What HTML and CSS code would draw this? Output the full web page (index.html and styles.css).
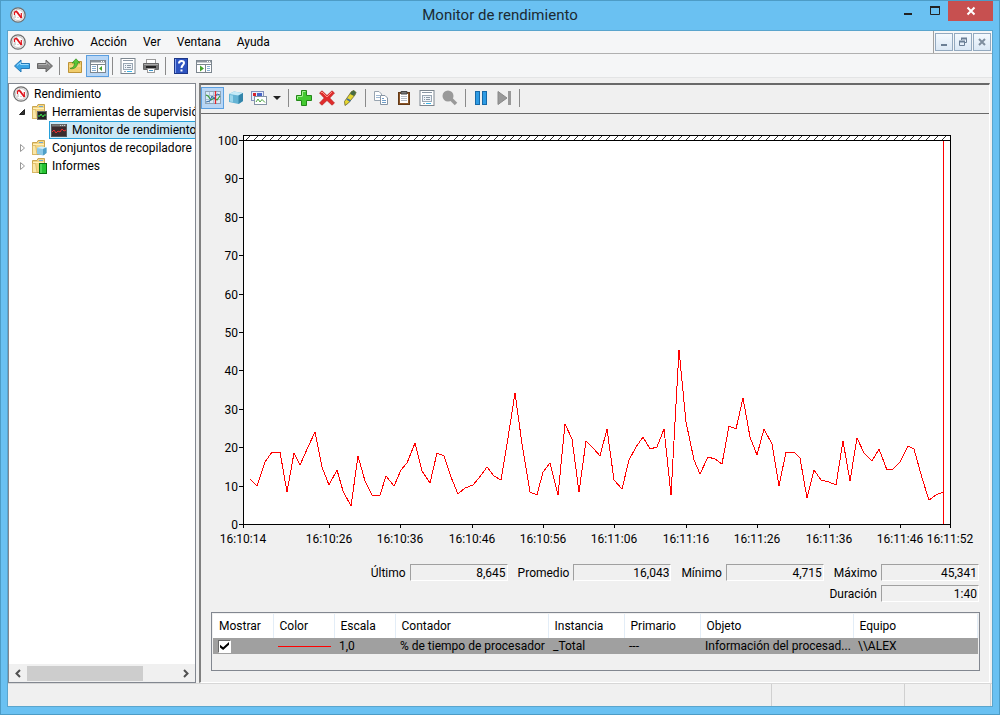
FILE: index.html
```html
<!DOCTYPE html>
<html lang="es">
<head>
<meta charset="utf-8">
<title>Monitor de rendimiento</title>
<link rel="stylesheet" href="styles.css">
</head>
<body>
<svg class="defs" aria-hidden="true">
  <symbol id="gauge" viewBox="0 0 16 16">
    <circle cx="8" cy="8" r="7.2" fill="#f4f4f4" stroke="#6e6e6e" stroke-width="1.300"/>
    <circle cx="8" cy="8" r="5.500" fill="#fff" stroke="#b5b0b0" stroke-width=".7"/>
    <path d="M5 11V8M8 11V10M8 5V7" stroke="#999" stroke-width=".8"/>
    <path d="M4.500 5L6.500 4.500L11.500 11" fill="none" stroke="#e0141c" stroke-width="1.800"/>
    <path d="M4.500 5V8M11.300 6V11" fill="none" stroke="#e0141c" stroke-width="1.200"/>
  </symbol>
  <symbol id="folder" viewBox="0 0 16 16">
    <path d="M1.500 14.500V2.500H6L7 .5H13.500V14.500Z" fill="#f3d582" stroke="#c9a551"/>
    <path d="M8 2.500H12" stroke="#6fa8d8"/><path d="M2 4.500H13" stroke="#fff0bb"/>
    <path d="M1.500 14.500V5.500H4.500L6 14.500Z" fill="#fae7a8" stroke="#d3ad55" stroke-width=".6"/>
  </symbol>
  <symbol id="props" viewBox="0 0 16 16">
    <rect x="1" y=".5" width="14" height="15" fill="#fff" stroke="#7c868f"/>
    <path d="M3 2.500H13" stroke="#8a97a5"/>
    <rect x="3.500" y="5.500" width="9" height="6" fill="#eef3f8" stroke="#9aa7b4"/>
    <path d="M5 7.500H6M7 7.500H11M5 9.500H6M7 9.500H11" stroke="#8a97a5"/>
    <path d="M4 13.500H6" stroke="#9aa7b4"/><path d="M7 13.500H12" stroke="#3bb5e8"/>
  </symbol>
</svg>

<header class="titlebar">
  <svg class="ic"><use href="#gauge"/></svg>
  <h1>Monitor de rendimiento</h1>
  <div class="caption">
    <button aria-label="Minimizar"><svg width="10" height="12"><rect x="1" y="8" width="8" height="2" fill="#222"/></svg></button>
    <button aria-label="Maximizar"><svg width="12" height="12"><path d="M1.500 2H10.500V9.500H1.500Z" fill="none" stroke="#222"/><rect x="1" y="1" width="10" height="2" fill="#222"/></svg></button>
    <button class="close" aria-label="Cerrar"><svg width="10" height="10"><path d="M1.500 1.500L8.500 8.500M8.500 1.500L1.500 8.500" stroke="#fff" stroke-width="2"/></svg></button>
  </div>
</header>

<main class="window">
  <nav class="menubar">
    <svg class="ic"><use href="#gauge"/></svg>
    <button>Archivo</button><button>Acción</button><button>Ver</button><button>Ventana</button><button>Ayuda</button>
    <div class="mdi">
      <button aria-label="Minimizar ventana"><svg width="10" height="10"><rect x="2" y="7" width="6" height="2" fill="#6b7f95"/></svg></button>
      <button aria-label="Restaurar ventana"><svg width="10" height="10"><path d="M3.500 3V1.500H8.500V5.500H7M1.500 4.500H6.500V8.500H1.500Z" fill="none" stroke="#6b7f95"/><path d="M3 1.500H9M1 4.500H7" stroke="#6b7f95" stroke-width="2"/></svg></button>
      <button aria-label="Cerrar ventana"><svg width="10" height="10"><path d="M2 2L8 8M8 2L2 8" stroke="#7f8e9e" stroke-width="2"/></svg></button>
    </div>
  </nav>

  <div class="toolbar top">
    <button aria-label="Atrás"><svg class="ic" viewBox="0 0 16 16"><path d="M.5 8L7 2V5.500H15.500V10.500H7V14Z" fill="#3aa5e6" stroke="#2479b8"/><path d="M3 7.500L6.500 4.500V6.500H14.500" fill="none" stroke="#9bdcff"/></svg></button>
    <button aria-label="Adelante"><svg class="ic" viewBox="0 0 16 16"><path d="M15.500 8L9 2V5.500H.5V10.500H9V14Z" fill="#858585" stroke="#666"/><path d="M13 7.500L9.500 4.500V6.500H1.500" fill="none" stroke="#b5b5b5"/></svg></button>
    <i class="sep"></i>
    <button aria-label="Subir un nivel"><svg class="ic" viewBox="0 0 16 16"><path d="M1.500 14.500V4.500H6L7.500 3.500H14.500V14.500Z" fill="#f0cc6b" stroke="#bd9338"/><path d="M2 8H14" stroke="#fbe7a4"/><path d="M3 10.500C6 10 7.500 8 7.500 5H5L9 .8L13 5H10.500C10.500 9 7 11.500 3 10.500Z" fill="#59c637" stroke="#368a1e" stroke-width=".7"/></svg></button>
    <button class="on" aria-label="Mostrar u ocultar árbol" aria-pressed="true"><svg class="ic" viewBox="0 0 16 16"><rect x=".5" y="2.500" width="15" height="12" fill="#fff" stroke="#7c868f"/><path d="M1 3.500H15" stroke="#8b949d" stroke-width="2"/><path d="M11 3.500H14" stroke="#fff" stroke-dasharray="1 1"/><path d="M1 6.500H15M7.500 7V14" stroke="#7c868f"/><path d="M2 8.500H6M2 10.500H6M2 12.500H6" stroke="#86aed2"/><path d="M12 8V13L9 10.500Z" fill="#43a32a"/></svg></button>
    <i class="sep"></i>
    <button aria-label="Propiedades"><svg class="ic"><use href="#props"/></svg></button>
    <button aria-label="Imprimir"><svg class="ic" viewBox="0 0 16 16"><rect x="3.500" y="1.500" width="9" height="5" fill="#fff" stroke="#999"/><path d="M.5 5.500H15.500V11.500H.5Z" fill="#777" stroke="#666"/><path d="M1 6.500H15" stroke="#aaa"/><rect x="3" y="8" width="10" height="2" fill="#222"/><rect x="4.500" y="10.500" width="7" height="4" fill="#fff" stroke="#999"/><path d="M6 12.500H10" stroke="#3d93c7"/></svg></button>
    <i class="sep"></i>
    <button aria-label="Ayuda"><svg class="ic" viewBox="0 0 16 16"><rect x="1.500" y=".5" width="13" height="15" fill="#2d53c0" stroke="#1d3788"/><path d="M2.500 1V15" stroke="#89a6ef"/><path d="M6 5.500C6 2 11 2.200 11 5C11 7 8.500 7.200 8.500 10" fill="none" stroke="#fff" stroke-width="2"/><rect x="7.500" y="11.500" width="2" height="2" fill="#fff"/></svg></button>
    <button aria-label="Mostrar panel de acciones"><svg class="ic" viewBox="0 0 16 16"><rect x=".5" y="2.500" width="15" height="12" fill="#fff" stroke="#7c868f"/><path d="M1 3.500H15" stroke="#8b949d" stroke-width="2"/><path d="M11 3.500H14" stroke="#fff" stroke-dasharray="1 1"/><path d="M1 6.500H15M9.500 7V14" stroke="#7c868f"/><path d="M11 8.500H14M11 10.500H14M11 12.500H14" stroke="#86aed2"/><path d="M4 7.500V13.500L8 10.500Z" fill="#43a32a"/></svg></button>
  </div>

  <div class="panes">
    <aside class="tree">
      <ul>
        <li><svg class="ic"><use href="#gauge"/></svg><span>Rendimiento</span></li>
        <li class="l1"><svg class="tw" viewBox="0 0 8 8"><path d="M6.500 1.500V6.500H1.500Z" fill="#333" stroke="#222"/></svg><svg class="ic" viewBox="0 0 16 16"><use href="#folder"/><rect x="6.500" y="7.500" width="9" height="8" fill="#222" stroke="#666"/><path d="M7 12H9L10 10L12 13L13 11H15" fill="none" stroke="#3fe04a"/></svg><span>Herramientas de supervisió</span></li>
        <li class="l2"><svg class="ic" viewBox="0 0 16 16"><rect x=".5" y="2.500" width="15" height="12" fill="#3a2c2e" stroke="#555"/><path d="M1 3.500H15" stroke="#777" stroke-width="2"/><path d="M9 3.500H14" stroke="#ccc" stroke-dasharray="1 1"/><path d="M1 10L3 8L5 11L7 9L9 10L11 7L13 9L15 8" fill="none" stroke="#f03030"/></svg><span>Monitor de rendimiento</span></li>
        <li class="l1"><svg class="tw" viewBox="0 0 8 8"><path d="M2.500 .5L6.500 4L2.500 7.500Z" fill="#fff" stroke="#999"/></svg><svg class="ic" viewBox="0 0 16 16"><use href="#folder"/><path d="M6 8L10 6.500L15.500 7.500V13L12 15.500L6 14Z" fill="#8cc8e6"/><path d="M6 8L12 9L15.500 7.500L10 6.500Z" fill="#d5effa"/><path d="M12 9L15.500 7.500V13L12 15.500Z" fill="#4f9fc8"/></svg><span>Conjuntos de recopiladore</span></li>
        <li class="l1"><svg class="tw" viewBox="0 0 8 8"><path d="M2.500 .5L6.500 4L2.500 7.500Z" fill="#fff" stroke="#999"/></svg><svg class="ic" viewBox="0 0 16 16"><use href="#folder"/><rect x="8.500" y="5.500" width="7" height="10" fill="#27c433" stroke="#08710f"/><path d="M10 6V15" stroke="#7be77f"/></svg><span>Informes</span></li>
      </ul>
      <div class="scroll">
        <button aria-label="Desplazar a la izquierda"><svg width="8" height="9"><path d="M6 1L2.500 4.500L6 8" fill="none" stroke="#505050" stroke-width="2"/></svg></button>
        <div class="track"><div class="thumb"></div></div>
        <button aria-label="Desplazar a la derecha"><svg width="8" height="9"><path d="M2 1L5.500 4.500L2 8" fill="none" stroke="#505050" stroke-width="2"/></svg></button>
      </div>
    </aside>

    <section class="monitor">
      <div class="toolbar">
        <button class="on" aria-label="Ver actividad actual" aria-pressed="true"><svg class="ic" viewBox="0 0 16 16"><rect x=".5" y="1.500" width="15" height="12" fill="#d8eaf8" stroke="#8fa5b8"/><path d="M4.500 2V13M8.500 2V13M1 5.500H15M1 9.500H15" stroke="#a9c0d4"/><path d="M1 5L3 6L6 10L9 8L12 10L15 6" fill="none" stroke="#3a9b35" stroke-width="1.200"/><path d="M1 12L5 11L7 6L9 9L12 4L15 5" fill="none" stroke="#356aa5"/><path d="M10.500 1V14" stroke="#e5232b" stroke-width="1.300"/></svg></button>
        <button aria-label="Ver datos de registro"><svg class="ic" viewBox="0 0 16 16"><path d="M1 4L6 1.500L15 3V11L10.500 14L1 12Z" fill="#64b3d4"/><path d="M1 4L10.500 5.500L15 3L6 1.500Z" fill="#c6eaf7"/><path d="M10.500 5.500L15 3V11L10.500 14Z" fill="#3485aa"/><path d="M2 5V11.500L5 12V5.500Z" fill="#9bd6ec"/></svg></button>
        <button aria-label="Cambiar tipo de gráfico"><svg class="ic" viewBox="0 0 16 16"><rect x=".5" y="1.500" width="12" height="9" fill="#e7eefb" stroke="#8290bd"/><rect x="2" y="3" width="3" height="3" fill="#d6222d"/><rect x="6" y="3" width="5" height="3" fill="#4964c5"/><rect x="3.500" y="6.500" width="12" height="8" fill="#fff" stroke="#8593a5"/><path d="M5 12L7 9L9 12L11 9.500L14 12.500" fill="none" stroke="#48a53e"/></svg></button>
        <button class="drop" aria-label="Más tipos"><svg width="8" height="5"><path d="M0 0H8L4 4Z" fill="#222"/></svg></button>
        <i class="sep"></i>
        <button aria-label="Agregar"><svg class="ic" viewBox="0 0 16 16"><path d="M5.500 .5H10.500V5.500H15.500V10.500H10.500V15.500H5.500V10.500H.5V5.500H5.500Z" fill="#43c930" stroke="#238818"/><path d="M6.500 6.500V1.500H9.500M1.500 9V6.500H6" fill="none" stroke="#a5f092"/></svg></button>
        <button aria-label="Eliminar"><svg class="ic" viewBox="0 0 16 16"><path d="M3 .8L8 5.500L13 .8L15.500 3L10.800 8L15.500 13L13 15.200L8 10.500L3 15.200L.5 13L5.200 8L.5 3Z" fill="#e02b2b" stroke="#b31b1b" stroke-width=".6"/><path d="M2 3L3 2L8 7L13 2" fill="none" stroke="#ff8b80"/></svg></button>
        <button aria-label="Resaltar"><svg class="ic" viewBox="0 0 16 16"><path d="M9.500 1.500L12 .5L14 2.500L13 5L6.500 13L3 15.500L2.500 11.500Z" fill="#e8d72f" stroke="#6a6530" stroke-width=".8"/><path d="M9.500 1.500L12 .5L14 2.500L12 6L8 4Z" fill="#476a43"/><path d="M5 9L8.500 11" stroke="#3f6f9b" stroke-width="2"/></svg></button>
        <i class="sep"></i>
        <button aria-label="Copiar propiedades"><svg class="ic" viewBox="0 0 16 16"><path d="M1.500 1.500H6L8.500 4V10.500H1.500Z" fill="#fff" stroke="#98a4b0"/><path d="M3 5.500H7M3 7.500H7" stroke="#9fb9d3"/><path d="M7.500 5.500H12L14.500 8V14.500H7.500Z" fill="#fff" stroke="#8694a3"/><path d="M9 8.500H11M9 10.500H13M9 12.500H13" stroke="#6e9cc8"/></svg></button>
        <button aria-label="Pegar lista de contadores"><svg class="ic" viewBox="0 0 16 16"><rect x="2.500" y="2.500" width="11" height="12" fill="#8a5426" stroke="#633a17"/><rect x="4" y="4" width="8" height="9" fill="#fff"/><path d="M5 6.500H11M5 8.500H11M5 10.500H11" stroke="#b5bcc5"/><path d="M5 1.500H11V4H5Z" fill="#777" stroke="#444"/></svg></button>
        <button aria-label="Propiedades"><svg class="ic"><use href="#props"/></svg></button>
        <button aria-label="Zoom"><svg class="ic" viewBox="0 0 16 16"><circle cx="6" cy="6" r="5.500" fill="#999"/><path d="M9 9L14 14" stroke="#999" stroke-width="3.500"/></svg></button>
        <i class="sep"></i>
        <button aria-label="Inmovilizar presentación"><svg class="ic" viewBox="0 0 16 16"><rect x="2.500" y="1.500" width="4" height="13" fill="#2e9be3" stroke="#1669a8"/><rect x="9.500" y="1.500" width="4" height="13" fill="#2e9be3" stroke="#1669a8"/></svg></button>
        <button aria-label="Actualizar datos"><svg class="ic" viewBox="0 0 16 16"><path d="M2 1.500L11 8L2 14.500Z" fill="#999" stroke="#888"/><rect x="12" y="1" width="3" height="14" fill="#999"/></svg></button>
        <i class="sep"></i>
      </div>

      <div class="view">
        <svg class="chart" viewBox="201 114 788 440" role="img" aria-label="% de tiempo de procesador">
          <defs><pattern id="hatch" width="8" height="5" patternUnits="userSpaceOnUse" patternTransform="translate(244 136)"><path d="M1 5L6 0" stroke="#333" stroke-width="1"/></pattern></defs>
          <rect x="243" y="135" width="708" height="389" fill="#fff"/>
          <rect x="244" y="136" width="706" height="4" fill="url(#hatch)"/>
          <path class="axis" d="M243.500 135V528M239 524.500H951M950.500 135V528M243 135.500H951M239 140.500H951M239 178.500H243M239 217.500H243M239 255.500H243M239 294.500H243M239 332.500H243M239 370.500H243M239 409.500H243M239 447.500H243M239 486.500H243M329.500 524V528M400.500 524V528M472.500 524V528M543.500 524V528M614.500 524V528M686.500 524V528M757.500 524V528M829.500 524V528M900.500 524V528"/>
          <path class="line" d="M943.500 141V524"/>
          <polyline class="line" points="250,479 257,486 265,462 272,452 280,452 287,492 294,453 300,465 308,447 315,432 322,467 329,485 337,470 343,491 351,506 358,456 365,481 372,495 380,495 386,476 394,486 401,470 407,463 415,443 422,471 430,483 437,453 444,456 451,477 458,494 465,488 473,485 479,478 487,467 494,476 501,480 508,438 515,393 522,444 530,492 537,495 543,472 550,463 558,495 565,424 572,439 579,492 586,441 594,449 600,456 607,429 614,480 622,489 629,460 636,447 643,437 650,449 657,447 664,429 671,495 679,350 686,422 694,460 700,474 708,457 715,459 722,464 729,426 736,429 743,398 750,437 757,455 764,429 772,444 779,486 786,452 794,452 800,458 807,498 814,470 821,480 829,482 836,485 843,441 850,481 857,438 864,453 872,461 879,449 887,470 893,469 900,462 908,446 914,449 922,478 929,500 936,495 943,492"/>
          <g class="ylab">
            <text x="238" y="145">100</text><text x="238" y="183">90</text><text x="238" y="222">80</text><text x="238" y="260">70</text><text x="238" y="299">60</text><text x="238" y="337">50</text><text x="238" y="375">40</text><text x="238" y="414">30</text><text x="238" y="452">20</text><text x="238" y="491">10</text><text x="238" y="529">0</text>
          </g>
          <g class="xlab">
            <text x="243" y="543">16:10:14</text><text x="329" y="543">16:10:26</text><text x="400" y="543">16:10:36</text><text x="472" y="543">16:10:46</text><text x="543" y="543">16:10:56</text><text x="614" y="543">16:11:06</text><text x="686" y="543">16:11:16</text><text x="757" y="543">16:11:26</text><text x="829" y="543">16:11:36</text><text x="900" y="543">16:11:46</text><text x="950" y="543">16:11:52</text>
          </g>
        </svg>

        <div class="stats">
          <label>Último <input readonly value="8,645"></label>
          <label>Promedio <input readonly value="16,043"></label>
          <label>Mínimo <input readonly value="4,715"></label>
          <label>Máximo <input readonly value="45,341"></label>
        </div>
        <div class="stats">
          <label>Duración <input readonly value="1:40"></label>
        </div>

        <div class="legend">
          <table>
            <colgroup><col class="c60"><col class="c61"><col class="c61"><col class="c153"><col class="c76"><col class="c76"><col class="c153"><col></colgroup>
            <thead><tr><th>Mostrar</th><th>Color</th><th>Escala</th><th>Contador</th><th>Instancia</th><th>Primario</th><th>Objeto</th><th>Equipo</th></tr></thead>
            <tbody><tr><td><input type="checkbox" checked aria-label="Mostrar"></td><td><div class="swatch"></div></td><td>1,0</td><td>% de tiempo de procesador</td><td>_Total</td><td>---</td><td>Información del procesad...</td><td>\\ALEX</td></tr></tbody>
          </table>
        </div>
      </div>
    </section>
  </div>

  <footer class="status"><span></span><span></span><span></span></footer>
</main>
</body>
</html>
```
FILE: styles.css
```css
* { box-sizing: border-box; }
body {
  margin: 0;
  height: 100vh;
  display: flex;
  flex-direction: column;
  padding: 0 6px 7px 6px;
  border: 1px solid #4d9cc6;
  background: #6ac1f2;
  color: #000;
  font: 12px/16px Roboto, "Open Sans", sans-serif;
}
button, input { font: inherit; color: inherit; }
button { border: 0; padding: 0; background: none; }
svg { display: block; flex: none; }
.defs { position: absolute; width: 0; height: 0; }
.ic { width: 16px; height: 16px; }

.titlebar {
  display: grid;
  grid-template-columns: 1fr auto 1fr;
  height: 29px;
  flex: none;
}
.titlebar .ic { margin: 6px 3px; }
.titlebar h1 { margin: 4px 0 0; font-size: 15px; line-height: 21px; font-weight: 400; color: #1c2a33; }
.caption { display: flex; justify-content: flex-end; align-items: flex-start; }
.caption button { width: 27px; height: 20px; display: grid; place-items: center; }
.caption .close { width: 45px; background: #c75050; }

.window {
  flex: 1;
  min-height: 0;
  display: flex;
  flex-direction: column;
  border: 1px solid #5aa5cd;
  background: #f0f0f0;
}
.menubar {
  display: flex;
  align-items: center;
  height: 23px;
  flex: none;
  padding-left: 2px;
  gap: 16px;
  background: #f5f6f7;
  border-bottom: 1px solid #b0b0b0;
}
.menubar .ic { margin-right: -8px; }
.mdi {
  margin-left: auto;
  display: flex;
  gap: 1px;
  padding: 2px 1px 0;
  height: 22px;
  border-left: 1px solid #a0a0a0;
}
.mdi button {
  width: 18px;
  height: 18px;
  display: grid;
  place-items: center;
  border: 1px solid #93a9bf;
  background: linear-gradient(#f4f9fe, #dbe8f5);
}
.toolbar { display: flex; align-items: center; }
.toolbar button { width: 23px; height: 22px; display: grid; place-items: center; }
.toolbar .on { background: #b8d6f5; border: 1px solid #5b9fe0; }
.toolbar .drop { width: 14px; }
.sep { display: grid; justify-content: center; width: 8px; height: 18px; flex: none; }
.sep::before { content: ""; width: 1px; height: 18px; background: #8a8a8a; }
.top { height: 24px; flex: none; padding: 1px 0 0 2px; background: #f5f6f7; border-bottom: 1px solid #e3e4e5; }
.top .sep { width: 7px; }

.panes {
  flex: 1;
  min-height: 0;
  display: grid;
  grid-template-columns: 188px minmax(0, 1fr);
  gap: 3px;
  padding: 5px 2px 0 0;
}
.tree {
  display: flex;
  flex-direction: column;
  min-width: 0;
  background: #fff;
  border: 1px solid #828790;
}
.tree ul { flex: 1; margin: 1px 0 0; padding: 0; list-style: none; overflow: hidden; }
.tree li { display: flex; align-items: center; height: 18px; padding-left: 4px; gap: 5px; white-space: nowrap; }
.tree .l1 { padding-left: 9px; }
.tw { width: 8px; height: 8px; }
.tree .l2 { margin-left: 40px; padding-left: 1px; border: 1px solid #26a0da; border-right: 0; background: #cbe8f6; }
.scroll { display: flex; height: 18px; background: #f0f0f0; align-items: center; }
.scroll button { width: 18px; height: 17px; display: grid; place-items: center; }
.track { flex: 1; height: 15px; }
.thumb { width: 77%; height: 100%; background: #cdcdcd; }

.monitor {
  display: flex;
  flex-direction: column;
  min-width: 0;
  border: 1px solid #fff;
  border-top: 2px solid #696969;
  border-left: 2px solid #808080;
}
.monitor .toolbar { height: 29px; flex: none; padding-bottom: 2px; border-bottom: 1px solid #696969; }
.view { flex: 1; min-height: 0; display: flex; flex-direction: column; }
.chart { width: 100%; height: auto; font-size: 12px; }
.axis { fill: none; stroke: #000; shape-rendering: crispEdges; }
.line { fill: none; stroke: #f00; shape-rendering: crispEdges; }
.ylab { text-anchor: end; }
.xlab { text-anchor: middle; }

.stats { display: flex; justify-content: flex-end; gap: 10px; padding: 0 10px 4px 0; }
.chart + .stats { padding-top: 10px; }
.stats label { display: flex; align-items: center; gap: 4px; }
.stats input {
  width: 98px;
  height: 17px;
  padding: 0 1px;
  text-align: right;
  background: #f0f0f0;
  border: 1px solid #fff;
  border-top-color: #a0a0a0;
  border-left-color: #a0a0a0;
}
.legend { margin: 6px 9px 11px 10px; padding: 1px; flex: 1; border: 1px solid #828790; }
table { width: 100%; table-layout: fixed; border-collapse: collapse; }
.c60 { width: 60px; }
.c61 { width: 61px; }
.c76 { width: 76px; }
.c153 { width: 153px; }
th { height: 24px; padding: 0 0 0 6px; font-weight: 400; text-align: left; background: #fff; border-right: 1px solid #e3edf7; }
td { height: 16px; padding: 0 0 0 5px; line-height: 15px; white-space: nowrap; overflow: hidden; background: #a0a0a0; }
.swatch { height: 1px; margin-right: 3px; background: #f00; }
input[type="checkbox"] {
  appearance: none;
  display: grid;
  place-items: center;
  width: 13px;
  height: 13px;
  margin: 0;
  background: #fff;
  border: 1px solid #fff;
  border-top-color: #696969;
  border-left-color: #696969;
}
input[type="checkbox"]:checked::before {
  content: "";
  width: 9px;
  height: 8px;
  background: #000;
  clip-path: polygon(0 35%, 35% 65%, 100% 0, 100% 35%, 35% 100%, 0 70%);
}
.status { display: grid; grid-template-columns: 1fr 133px 86px; height: 23px; flex: none; padding-right: 1px; border-top: 1px solid #d7d7d7; }
.status span { border-right: 1px solid #d0d0d0; }
```
